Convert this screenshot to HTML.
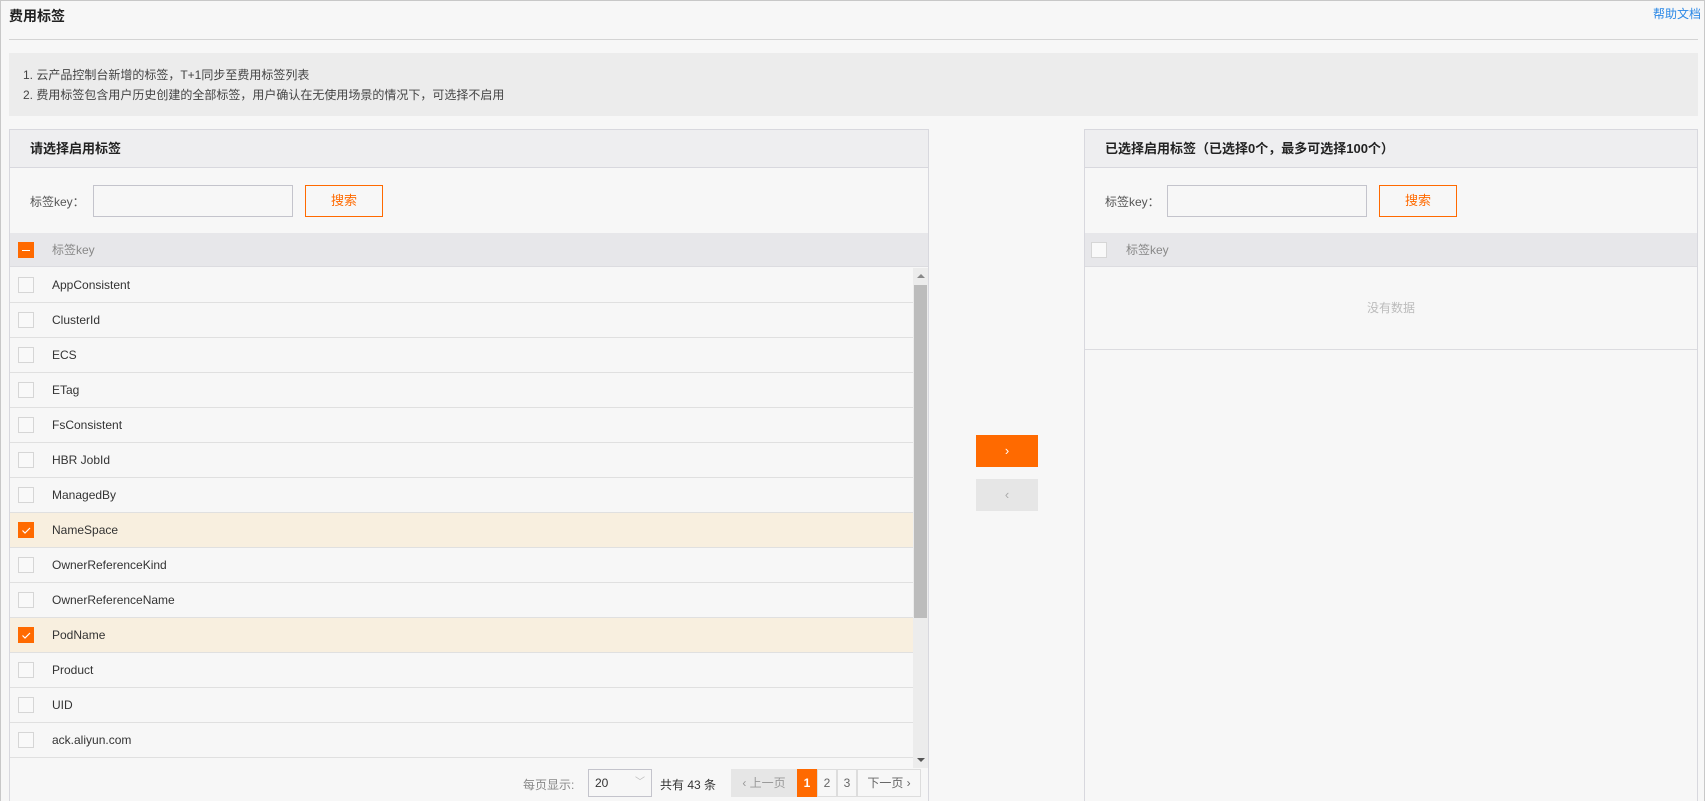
<!DOCTYPE html>
<html style="width:1705px;height:801px;overflow:hidden"><head><meta charset="utf-8"><style>
*{box-sizing:border-box;margin:0;padding:0}
body{width:1705px;height:801px;overflow:hidden;background:#f7f7f7;font-family:"Liberation Sans","Noto Sans CJK SC",sans-serif;font-size:12px;color:#333;position:relative;border:1px solid #c8c8c8;border-bottom:none}
.a{position:absolute}
.title{left:8px;top:5px;font-size:14px;font-weight:bold;color:#222}
.help{right:3px;top:4px;color:#2b88e6;font-size:12px}
.hr{left:8px;top:38px;width:1689px;height:1px;background:#d4d4d4}
.note{left:8px;top:52px;width:1689px;height:63px;background:#ececec;padding:13px 0 0 14px;line-height:19.5px;color:#444}
.panel{top:128px;border:1px solid #d8d8de;border-bottom:none;background:#f7f7f7;height:673px}
.ph{height:38px;background:#eeeef0;border-bottom:1px solid #d8d8de;font-weight:bold;font-size:13px;line-height:37px;padding-left:20px;color:#222}
.lbl{color:#555}
.inp{border:1px solid #c4c4cc;height:32px;background:#f7f7f7}
.btn{border:1px solid #ff6a00;color:#ff6a00;height:32px;text-align:center;line-height:30px;font-size:13px}
.th{height:34px;background:#e7e7ea;border-bottom:1px solid #dcdce0;color:#888;line-height:34px}
.cb{position:absolute;width:16px;height:16px;border:1px solid #d6d6d6;background:#f9f9f9}
.cb.on{background:#ff6a00;border-color:#ff6a00}
.row{position:absolute;left:0;width:903px;height:35px;border-bottom:1px solid #e0e0e0;line-height:34px;color:#333}
.row.sel{background:#f8efdf}
.row span{position:absolute;left:42px}
.row .cb{left:8px;top:9px}
</style></head><body>
<div class="a title">费用标签</div>
<div class="a help">帮助文档</div>
<div class="a hr"></div>
<div class="a note">1. 云产品控制台新增的标签，T+1同步至费用标签列表<br>2. 费用标签包含用户历史创建的全部标签，用户确认在无使用场景的情况下，可选择不启用</div>

<div class="a panel" style="left:8px;width:920px">
 <div class="ph">请选择启用标签</div>
 <div class="a lbl" style="left:20px;top:63px">标签key：</div>
 <div class="a inp" style="left:83px;top:55px;width:200px"></div>
 <div class="a btn" style="left:295px;top:55px;width:78px">搜索</div>
 <div class="a th" style="left:0;top:103px;width:918px"><span style="position:absolute;left:42px">标签key</span></div>
 <div class="cb on" style="left:8px;top:112px"><div style="position:absolute;left:3px;top:7px;width:8px;height:1px;background:#fff"></div></div>
 <div class="a" style="left:0;top:138px;width:918px;height:500px">
  <div class="row" style="top:0"><div class="cb"></div><span>AppConsistent</span></div>
  <div class="row" style="top:35px"><div class="cb"></div><span>ClusterId</span></div>
  <div class="row" style="top:70px"><div class="cb"></div><span>ECS</span></div>
  <div class="row" style="top:105px"><div class="cb"></div><span>ETag</span></div>
  <div class="row" style="top:140px"><div class="cb"></div><span>FsConsistent</span></div>
  <div class="row" style="top:175px"><div class="cb"></div><span>HBR JobId</span></div>
  <div class="row" style="top:210px"><div class="cb"></div><span>ManagedBy</span></div>
  <div class="row sel" style="top:245px"><div class="cb on"><svg width="14" height="14" style="position:absolute;left:0;top:0"><path d="M3.5 7.5l2.5 2.5 5-5" stroke="#fff" stroke-width="1.2" fill="none"/></svg></div><span>NameSpace</span></div>
  <div class="row" style="top:280px"><div class="cb"></div><span>OwnerReferenceKind</span></div>
  <div class="row" style="top:315px"><div class="cb"></div><span>OwnerReferenceName</span></div>
  <div class="row sel" style="top:350px"><div class="cb on"><svg width="14" height="14" style="position:absolute;left:0;top:0"><path d="M3.5 7.5l2.5 2.5 5-5" stroke="#fff" stroke-width="1.2" fill="none"/></svg></div><span>PodName</span></div>
  <div class="row" style="top:385px"><div class="cb"></div><span>Product</span></div>
  <div class="row" style="top:420px"><div class="cb"></div><span>UID</span></div>
  <div class="row" style="top:455px"><div class="cb"></div><span>ack.aliyun.com</span></div>
  <div class="a" style="left:903px;top:0;width:15px;height:500px;background:#ececec">
   <div class="a" style="left:4px;top:6px;border:4px solid transparent;border-bottom:4px solid #888;border-top:0"></div>
   <div class="a" style="left:1px;top:17px;width:13px;height:333px;background:#bcbcbc"></div>
   <div class="a" style="left:4px;top:490px;border:4px solid transparent;border-top:4px solid #555;border-bottom:0"></div>
  </div>
 </div>
 <div class="a" style="left:513px;top:646px;color:#888">每页显示:</div>
 <div class="a" style="left:578px;top:639px;width:64px;height:28px;border:1px solid #c4c4cc;line-height:26px;padding-left:6px;color:#333">20<span style="position:absolute;right:6px;color:#bbb;font-size:10px">﹀</span></div>
 <div class="a" style="left:650px;top:646px">共有 43 条</div>
 <div class="a" style="left:721px;top:639px;width:66px;height:28px;background:#e6e6e6;color:#999;line-height:28px;text-align:center">‹ 上一页</div>
 <div class="a" style="left:787px;top:639px;width:20px;height:28px;background:#ff6a00;color:#fff;line-height:28px;text-align:center;font-weight:bold">1</div>
 <div class="a" style="left:807px;top:639px;width:20px;height:28px;border:1px solid #ddd;color:#666;line-height:26px;text-align:center">2</div>
 <div class="a" style="left:827px;top:639px;width:20px;height:28px;border:1px solid #ddd;color:#666;line-height:26px;text-align:center">3</div>
 <div class="a" style="left:847px;top:639px;width:64px;height:28px;border:1px solid #ddd;color:#666;line-height:26px;text-align:center">下一页 ›</div>
</div>

<div class="a" style="left:975px;top:434px;width:62px;height:32px;background:#ff6a00;color:#fff;text-align:center;line-height:31px;font-size:13px">›</div>
<div class="a" style="left:975px;top:478px;width:62px;height:32px;background:#e6e6e6;color:#aaa;text-align:center;line-height:31px;font-size:13px">‹</div>

<div class="a panel" style="left:1083px;width:614px">
 <div class="ph">已选择启用标签（已选择0个，最多可选择100个）</div>
 <div class="a lbl" style="left:20px;top:63px">标签key：</div>
 <div class="a inp" style="left:82px;top:55px;width:200px"></div>
 <div class="a btn" style="left:294px;top:55px;width:78px">搜索</div>
 <div class="a th" style="left:0;top:103px;width:612px"><span style="position:absolute;left:41px">标签key</span></div>
 <div class="cb" style="left:6px;top:112px"></div>
 <div class="a" style="left:0;top:138px;width:612px;height:82px;border-bottom:1px solid #dcdce0;text-align:center;line-height:80px;color:#bbb">没有数据</div>
</div>
</body></html>
